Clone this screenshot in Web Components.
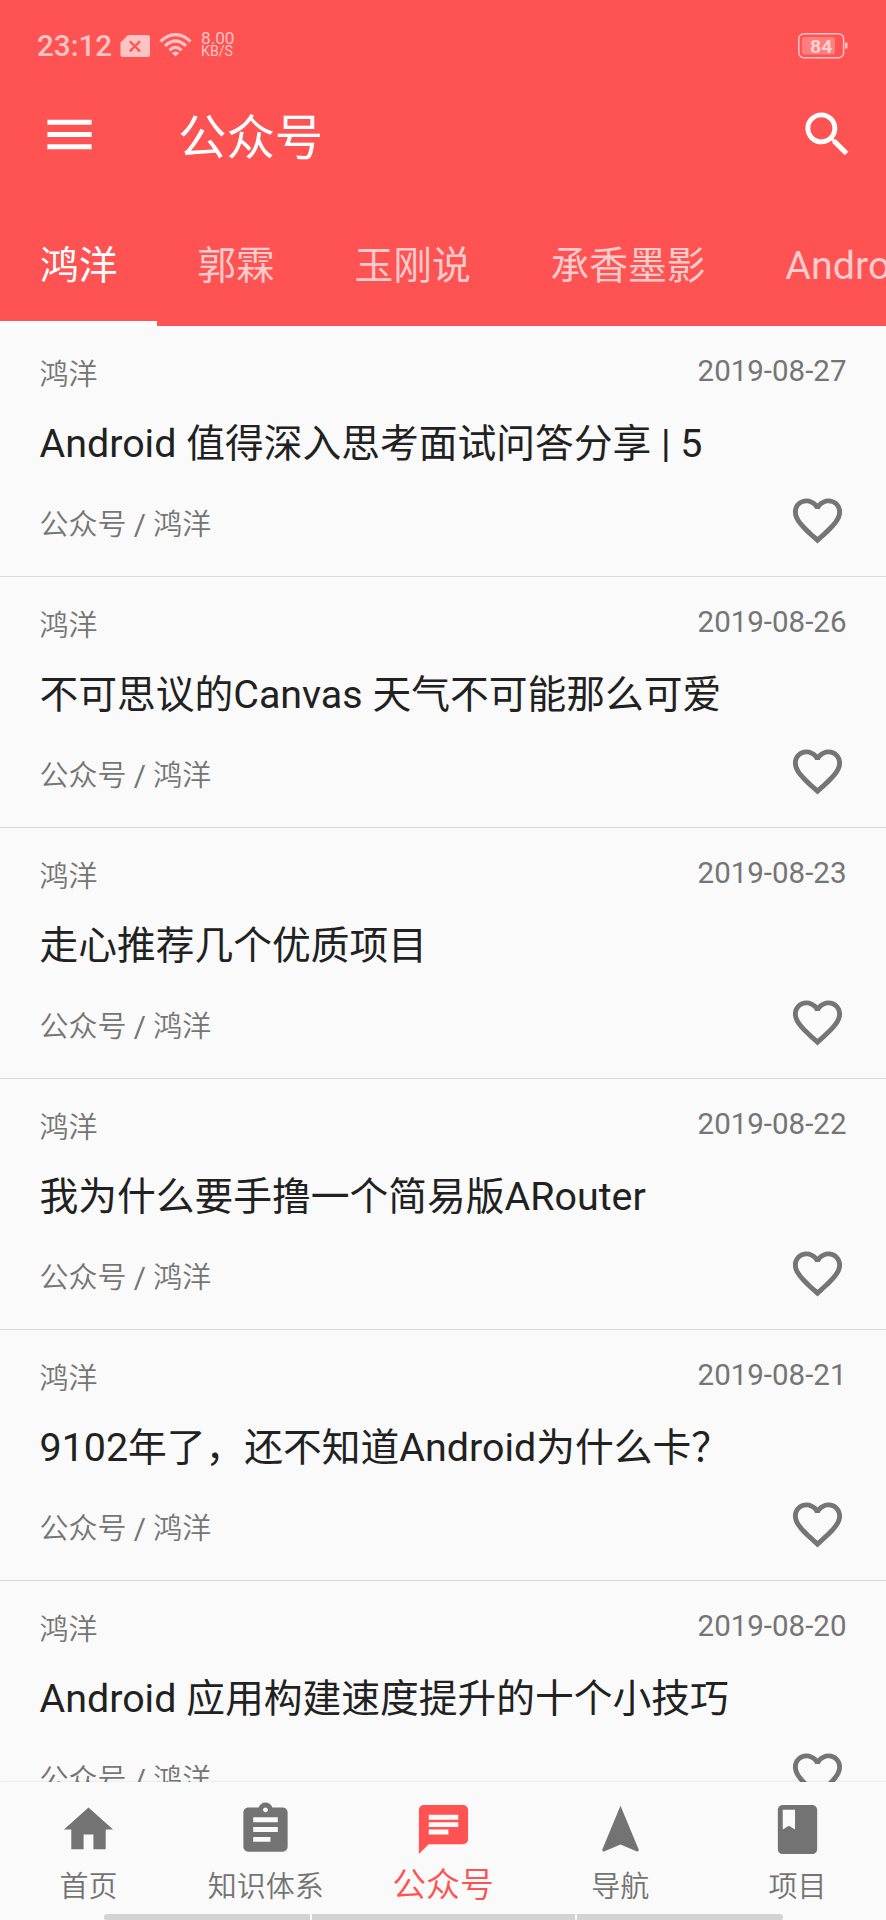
<!DOCTYPE html>
<html lang="zh-CN">
<head>
<meta charset="utf-8">
<title>公众号</title>
<style>
html,body{margin:0;padding:0;background:#fafafa}
body{width:886px;height:1920px;overflow:hidden;font-family:Roboto,"Noto Sans CJK SC",sans-serif}
</style>
</head>
<body>
<wx-app></wx-app>
<script>
const define = (name, render) => customElements.define(name, class extends HTMLElement {
  connectedCallback() {
    if (this.shadowRoot) return;
    this.attachShadow({ mode: 'open' }).innerHTML = render(this);
  }
});

// Han runs are set a little narrower than the Latin runs beside them.
define('wx-text', el => `<style>
:host{display:inline-block;white-space:pre}
.h{font-family:"Noto Sans CJK SC",sans-serif;font-size:.984em;font-weight:var(--han,350)}
</style>` + el.getAttribute('value').replace(/[\u3000-\u9fff\uff00-\uffef]+/g, m => `<span class="h">${m}</span>`));

const paths = {
  menu: 'M3 18h18v-2H3v2zm0-5h18v-2H3v2zm0-7v2h18V6H3z',
  search: 'M15.5 14h-.79l-.28-.27A6.471 6.471 0 0 0 16 9.5 6.5 6.5 0 1 0 9.5 16c1.61 0 3.09-.59 4.23-1.57l.27.28v.79l5 4.99L20.49 19l-4.99-5zm-6 0C7.01 14 5 11.99 5 9.5S7.01 5 9.5 5 14 7.01 14 9.5 11.99 14 9.5 14z',
  heart: 'M16.5 3c-1.74 0-3.41.81-4.5 2.09C10.91 3.81 9.24 3 7.5 3 4.42 3 2 5.42 2 8.5c0 3.78 3.4 6.86 8.55 11.54L12 21.35l1.45-1.32C18.6 15.36 22 12.28 22 8.5 22 5.42 19.58 3 16.5 3zm-4.4 15.55l-.1.1-.1-.1C7.14 14.24 4 11.39 4 8.5 4 6.5 5.5 5 7.5 5c1.54 0 3.04.99 3.57 2.36h1.87C13.46 5.99 14.96 5 16.5 5c2 0 3.5 1.5 3.5 3.5 0 2.89-3.14 5.74-7.9 10.05z',
  home: 'M10 20v-6h4v6h5v-8h3L12 3 2 12h3v8z',
  tree: 'M19 3h-4.18C14.4 1.84 13.3 1 12 1c-1.3 0-2.4.84-2.82 2H5c-1.1 0-2 .9-2 2v14c0 1.1.9 2 2 2h14c1.1 0 2-.9 2-2V5c0-1.1-.9-2-2-2zm-7 0c.55 0 1 .45 1 1s-.45 1-1 1-1-.45-1-1 .45-1 1-1zm2 14H7v-2h7v2zm3-4H7v-2h10v2zm0-4H7V7h10v2z',
  chat: 'M20 2H4c-1.1 0-1.99.9-1.99 2L2 22l4-4h14c1.1 0 2-.9 2-2V4c0-1.1-.9-2-2-2zM6 9h12v2H6V9zm8 5H6v-2h8v2zm4-6H6V6h12v2z',
  nav: 'M12 2.300L4.600 20.100Q4.400 21 5.300 20.900L12 18.100l6.700 2.800Q19.600 21 19.400 20.100z',
  book: 'M18 2H6c-1.1 0-2 .9-2 2v16c0 1.1.9 2 2 2h12c1.1 0 2-.9 2-2V4c0-1.1-.9-2-2-2zM6 4h5v8l-2.5-1.5L6 12V4z'
};
define('wx-icon', el => `<style>:host{display:block;width:59px;height:59px;flex:none}svg{display:block;width:100%;height:100%}</style>
<svg viewBox="0 0 24 24" fill="currentColor"><path d="${paths[el.getAttribute('name')]}"/></svg>`);

define('wx-status', () => `<style>
:host{display:flex;align-items:center;height:92px;padding:0 38.500px 0 37px;box-sizing:border-box;color:#ffc3c3}
.t{font-size:29.6px;line-height:34px;font-weight:500;width:83px}
svg{display:block;flex:none}
.sp{margin:-2px 0 0 9px;font-size:14.2px;line-height:13px;font-weight:400}
.sp b{display:block;font-weight:400}
.sp b:first-child{font-size:17.2px}
.g{flex:1}
</style><span class="t">23:12</span>
<svg width="30" height="22" viewBox="0 0 30 22"><path fill="currentColor" d="M8 0H27.5Q30 0 30 2.500V19.500Q30 22 27.500 22H3Q.5 22 .5 19.500V7.500Z"/><path d="M9.800 6.200L20 16.400M20 6.200L9.800 16.400" stroke="#ff5252" stroke-width="2.200"/></svg>
<svg style="margin:-2px 0 0 9px" width="33" height="24" viewBox="0 0 33 24" fill="none" stroke="currentColor" stroke-width="3.200"><path d="M1.500 8.500Q16.500-5.200 31.500 8.500M6 13Q16.500 3 27 13M10.500 17.300Q16.500 11.500 22.500 17.300"/><path d="M12.800 20Q16.500 17 20.200 20L16.500 23.600Z" fill="currentColor" stroke="none"/></svg>
<span class="sp"><b>8.00</b><b>KB/S</b></span><span class="g"></span>
<svg width="50" height="26" viewBox="0 0 50 26"><rect x=".8" y=".8" width="44.800" height="23.900" rx="5" fill="none" stroke="currentColor" stroke-width="1.500"/><rect x="4" y="4" width="33" height="17.500" rx="2.500" fill="#ff7f7f"/><path d="M47 9.500h2.500v6H47z" fill="currentColor"/><text x="12" y="19.500" font-size="19.200" font-weight="700" textLength="22.500" lengthAdjust="spacingAndGlyphs" fill="#ffd0d0">84</text></svg>`);

define('wx-toolbar', () => `<style>
:host{display:flex;align-items:center;height:85px;padding:0 29.500px 0 39.500px;color:#fff;--han:400}
wx-text{font-size:49.2px;line-height:60px;margin:3px 0 0 79.500px;flex:1}
</style><wx-icon name="menu"></wx-icon><wx-text value="公众号"></wx-text><wx-icon name="search"></wx-icon>`);

define('wx-tab', el => `<style>
:host{display:flex;flex:none;align-items:center;padding:0 39.900px;color:#ffcbcb;font-size:39.4px;border-bottom:5px solid transparent;box-sizing:border-box;--han:400}
:host([active]){color:#fff;border-color:#fff}
wx-text{line-height:50px;margin-top:-1px}
</style><wx-text value="${el.getAttribute('label')}"></wx-text>`);

define('wx-tabs', () => `<style>
:host{display:flex;height:118px;overflow:hidden;margin-top:auto}
</style>${['鸿洋', '郭霖', '玉刚说', '承香墨影', 'Android群英传'].map((t, i) => `<wx-tab label="${t}" ${i ? '' : 'active'}></wx-tab>`).join('')}`);

define('wx-article', el => `<style>
:host{display:flex;flex-direction:column;box-sizing:border-box;height:251px;flex:none;padding:28px 39.500px 0 39.500px;border-bottom:1px solid #dadada;color:#757575;font-size:29.5px}
.r{display:flex;justify-content:space-between;align-items:center}
.top{height:36px}
.top wx-text{margin-top:-1px}
.top span{margin-top:-3px}
.title{font-size:39.4px;line-height:50px;color:#212121;margin-top:25px;--han:400}
.bot{margin-top:23px;height:60px}
.bot wx-icon{margin-top:-3px}
</style><div class="r top"><wx-text value="鸿洋"></wx-text><span>${el.getAttribute('date')}</span></div>
<wx-text class="title" value="${el.getAttribute('heading')}"></wx-text>
<div class="r bot"><wx-text value="公众号 / 鸿洋"></wx-text><wx-icon name="heart"></wx-icon></div>`);

define('wx-nav-item', el => `<style>
:host{display:flex;flex:1;flex-direction:column;align-items:center;padding-top:18px;color:#737373;font-size:29.5px}
:host([active]){color:#ff5252;font-size:34.4px}
wx-text{line-height:40px;margin-top:5px}
:host([active]) wx-text{margin-top:3.500px}
</style><wx-icon name="${el.getAttribute('icon')}"></wx-icon><wx-text value="${el.getAttribute('label')}"></wx-text>`);

define('wx-nav', () => `<style>
:host{display:flex;height:138px;flex:none;background:#fafafa;box-shadow:0 0 3px #0000001f;position:relative}
.grip{position:absolute;left:104px;bottom:0;width:679px;height:6px;display:flex;gap:2.500px}
.grip i{background:#d3d3d3;flex:263}
.grip i:first-child{flex:206;border-radius:4px 0 0 3px}
.grip i:last-child{flex:206;border-radius:0 4px 3px 0}
</style>
<wx-nav-item icon="home" label="首页"></wx-nav-item><wx-nav-item icon="tree" label="知识体系"></wx-nav-item><wx-nav-item icon="chat" label="公众号" active></wx-nav-item><wx-nav-item icon="nav" label="导航"></wx-nav-item><wx-nav-item icon="book" label="项目"></wx-nav-item>
<div class="grip"><i></i><i></i><i></i></div>`);

define('wx-app', () => `<style>
:host{display:flex;flex-direction:column;width:886px;height:1920px;overflow:hidden;background:#fafafa}
header{display:flex;flex-direction:column;height:326px;flex:none;background:#ff5252}
main{flex:1;min-height:0;overflow:hidden;display:flex;flex-direction:column}
</style><header><wx-status></wx-status><wx-toolbar></wx-toolbar><wx-tabs></wx-tabs></header>
<main>${[
  ['2019-08-27', 'Android 值得深入思考面试问答分享 | 5'],
  ['2019-08-26', '不可思议的Canvas 天气不可能那么可爱'],
  ['2019-08-23', '走心推荐几个优质项目'],
  ['2019-08-22', '我为什么要手撸一个简易版ARouter'],
  ['2019-08-21', '9102年了，还不知道Android为什么卡？'],
  ['2019-08-20', 'Android 应用构建速度提升的十个小技巧']
].map(([d, h]) => `<wx-article date="${d}" heading="${h}"></wx-article>`).join('')}</main><wx-nav></wx-nav>`);
</script>
</body>
</html>
